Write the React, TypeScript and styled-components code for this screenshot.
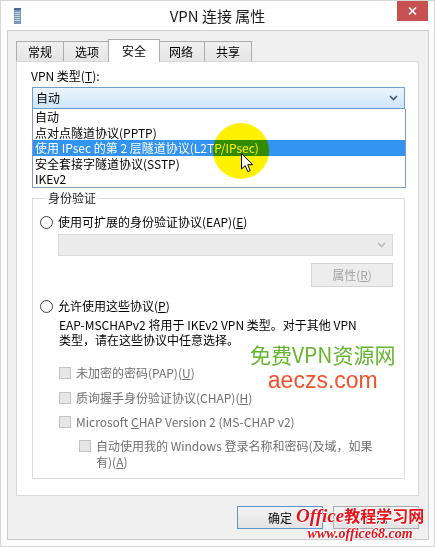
import styled, { createGlobalStyle } from "styled-components";

const GlobalStyle = createGlobalStyle`
  html, body {
    margin: 0;
    padding: 0;
    background: #fff;
  }
  body {
    font-family: "Noto Sans CJK SC", "Noto Sans", sans-serif;
    font-size: 12px;
    color: #000;
  }
  u {
    text-decoration: underline;
    text-underline-offset: 1px;
  }
`;

const Window = styled.div`
  position: relative;
  width: 435px;
  height: 547px;
  box-sizing: border-box;
  background: #fbfbfb;
  border: 1px solid #d6d6d6;
  display: flex;
  flex-direction: column;
  overflow: hidden;
`;

const TitleBar = styled.div`
  display: grid;
  grid-template-columns: 1fr auto 1fr;
  align-items: center;
  height: 29px;
  background: #fff;
`;

const TitleIcon = styled.svg`
  justify-self: start;
  margin-left: 13px;
`;

const TitleText = styled.div`
  font-size: 15px;
  line-height: 29px;
  color: #1b1b1b;
`;

const CloseButton = styled.div`
  justify-self: end;
  align-self: start;
  width: 31px;
  height: 20px;
  margin-right: 6px;
  background: #c75050;
  display: flex;
  align-items: center;
  justify-content: center;
`;

const Client = styled.div`
  flex: 1;
  margin: 0 5px 6px 6px;
  background: #f0f0f0;
  border: 1px solid #cdcdcd;
  padding: 8px 9px 10px 8px;
  display: flex;
  flex-direction: column;
`;

const TabStrip = styled.div`
  display: flex;
  align-items: flex-end;
  height: 23px;
`;

const Tab = styled.div<{ $active?: boolean }>`
  box-sizing: border-box;
  height: ${(p) => (p.$active ? "23px" : "20px")};
  margin: ${(p) => (p.$active ? "0 -2px 0 -3px" : "0 0 1px -1px")};
  padding: ${(p) => (p.$active ? "2px 13px 0" : "1px 11px 0")};
  border: 1px solid #acacac;
  border-bottom: none;
  background: ${(p) =>
    p.$active ? "#fff" : "linear-gradient(#f0f0f0, #e5e5e5)"};
  line-height: 17px;
  position: ${(p) => (p.$active ? "relative" : "static")};
  z-index: ${(p) => (p.$active ? 1 : "auto")};

  &:first-child {
    margin-left: 0;
  }
`;

const Panel = styled.div`
  flex: 1;
  margin-top: -1px;
  background: #fff;
  border: 1px solid #d9d9d9;
  padding: 6px 13px 0 14px;
  display: flex;
  flex-direction: column;
`;

const FieldLabel = styled.div`
  line-height: 16px;
`;

const SelectField = styled.div`
  position: relative;
  margin-top: 3px;
  margin-left: 1px;
`;

const ComboBox = styled.div<{ $disabled?: boolean }>`
  box-sizing: border-box;
  height: 22px;
  display: flex;
  align-items: center;
  justify-content: space-between;
  padding: 0 6px 0 3px;
  border: 1px solid ${(p) => (p.$disabled ? "#d9d9d9" : "#6f9dc9")};
  background: ${(p) =>
    p.$disabled ? "#ececec" : "linear-gradient(#ecf5fc, #cfe5f7)"};
  line-height: 16px;
`;

const DropList = styled.ul`
  position: absolute;
  left: 0;
  right: -1px;
  top: 100%;
  z-index: 2;
  margin: 0;
  padding: 0;
  list-style: none;
  background: #fff;
  border: 1px solid #7f9dbc;
  border-top: none;
`;

const DropItem = styled.li<{ $active?: boolean }>`
  height: 15.6px;
  line-height: 15.6px;
  padding-left: 2px;
  white-space: nowrap;
  background: ${(p) => (p.$active ? "#3393f0" : "transparent")};
  color: ${(p) => (p.$active ? "#fff" : "#000")};
`;

const GroupBox = styled.fieldset`
  margin: 81px 0 0 1px;
  padding: 8px 11px 8px 7px;
  border: 1px solid #dcdcdc;
  display: flex;
  flex-direction: column;
  min-width: 0;
`;

const Legend = styled.legend`
  margin-left: 6px;
  padding: 0 2px;
  line-height: 16px;
  color: #1a1a1a;
`;

const OptionRow = styled.label<{ $gap?: number; $indent?: number; $disabled?: boolean }>`
  display: flex;
  align-items: flex-start;
  gap: 5px;
  margin-top: ${(p) => p.$gap ?? 0}px;
  margin-left: ${(p) => p.$indent ?? 0}px;
  line-height: 16px;
  color: ${(p) => (p.$disabled ? "#6f6f6f" : "#000")};
`;

const Radio = styled.span`
  flex: none;
  box-sizing: border-box;
  width: 13px;
  height: 13px;
  margin-top: 1.5px;
  border: 1px solid #444;
  border-radius: 50%;
  background: #fff;
`;

const CheckBox = styled.span`
  flex: none;
  box-sizing: border-box;
  width: 12px;
  height: 12px;
  margin-top: 2px;
  border: 1px solid #c2c2c2;
  background: #e6e6e6;
`;

const SubSelect = styled.div`
  margin: 4px 0 0 18px;
`;

const SideButton = styled.div`
  align-self: flex-end;
  box-sizing: border-box;
  width: 82px;
  height: 24px;
  margin-top: 7px;
  border: 1px solid #d5d5d5;
  background: #ededed;
  color: #a3a3a3;
  line-height: 22px;
  text-align: center;
`;

const Description = styled.div`
  margin: 3px 0 0 19px;
  line-height: 15px;
`;

const ButtonRow = styled.div`
  display: flex;
  justify-content: flex-end;
  gap: 10px;
  margin-top: 10px;
`;

const DialogButton = styled.div<{ $default?: boolean }>`
  box-sizing: border-box;
  width: 86px;
  height: 23px;
  border: 1px solid ${(p) => (p.$default ? "#5d94cc" : "#acacac")};
  background: linear-gradient(#f4f4f4, #e3e3e3);
  line-height: 21px;
  text-align: center;
`;

const Spotlight = styled.div`
  position: absolute;
  left: 212px;
  top: 122px;
  width: 56px;
  height: 56px;
  border-radius: 50%;
  background: #fff100;
  mix-blend-mode: multiply;
  z-index: 5;
`;

const Pointer = styled.svg`
  position: absolute;
  left: 240px;
  top: 152px;
  z-index: 6;
`;

const SiteMark = styled.div`
  position: absolute;
  left: 249px;
  top: 343px;
  z-index: 4;
  display: flex;
  flex-direction: column;
  align-items: center;
  gap: 4px;
  line-height: 1;
`;

const SiteName = styled.span`
  font-size: 21px;
  color: #66b52f;
`;

const SiteUrl = styled.span`
  font-family: "Liberation Sans", Arial, sans-serif;
  font-size: 23px;
  color: #f2512c;
`;

const OfficeMark = styled.div`
  position: absolute;
  left: 295px;
  top: 505px;
  z-index: 4;
  display: flex;
  flex-direction: column;
  align-items: center;
  color: #e5141b;
  line-height: 1;
  text-shadow: 1px 0 #fff, -1px 0 #fff, 0 1px #fff, 0 -1px #fff;
`;

const OfficeTitle = styled.span`
  font-size: 16px;
  font-weight: bold;
  white-space: nowrap;

  em {
    font-family: "Liberation Serif", serif;
    font-style: italic;
    font-size: 19px;
  }
`;

const OfficeUrl = styled.span`
  font-family: "Liberation Serif", serif;
  font-style: italic;
  font-weight: bold;
  font-size: 14px;
  margin-top: 2px;
`;

const Chevron = ({ color }: { color: string }) => (
  <svg width="9" height="6" viewBox="0 0 9 6">
    <polyline
      points="1,1 4.5,4.5 8,1"
      fill="none"
      stroke={color}
      strokeWidth="1.6"
    />
  </svg>
);

const vpnTypes = [
  "自动",
  "点对点隧道协议(PPTP)",
  "使用 IPsec 的第 2 层隧道协议(L2TP/IPsec)",
  "安全套接字隧道协议(SSTP)",
  "IKEv2",
];

const tabs = ["常规", "选项", "安全", "网络", "共享"];

export default function App() {
  return (
    <>
      <GlobalStyle />
      <Window>
        <TitleBar>
          <TitleIcon width="7" height="16" viewBox="0 0 7 16">
            <rect x="0" y="0" width="7" height="16" fill="#7b98bb" />
            <rect x="0" y="0" width="7" height="2" fill="#4d6c92" />
            {[4, 6, 8, 10, 12].map((y) => (
              <rect key={y} x="1" y={y} width="5" height="1" fill="#c7d6e8" />
            ))}
          </TitleIcon>
          <TitleText>VPN 连接 属性</TitleText>
          <CloseButton>
            <svg width="9" height="8" viewBox="0 0 9 8">
              <path d="M1 0.5 L8 7.5 M8 0.5 L1 7.5" stroke="#fff" strokeWidth="1.6" />
            </svg>
          </CloseButton>
        </TitleBar>

        <Client>
          <TabStrip>
            {tabs.map((t) => (
              <Tab key={t} $active={t === "安全"}>
                {t}
              </Tab>
            ))}
          </TabStrip>

          <Panel>
            <FieldLabel>
              VPN 类型(<u>T</u>):
            </FieldLabel>
            <SelectField>
              <ComboBox>
                <span>自动</span>
                <Chevron color="#3f5a78" />
              </ComboBox>
              <DropList>
                {vpnTypes.map((v, i) => (
                  <DropItem key={v} $active={i === 2}>
                    {v}
                  </DropItem>
                ))}
              </DropList>
            </SelectField>

            <GroupBox>
              <Legend>身份验证</Legend>
              <OptionRow>
                <Radio />
                <span>
                  使用可扩展的身份验证协议(EAP)(<u>E</u>)
                </span>
              </OptionRow>
              <SubSelect>
                <ComboBox $disabled>
                  <span />
                  <Chevron color="#b9b9b9" />
                </ComboBox>
              </SubSelect>
              <SideButton>
                属性(<u>R</u>)
              </SideButton>

              <OptionRow $gap={11}>
                <Radio />
                <span>
                  允许使用这些协议(<u>P</u>)
                </span>
              </OptionRow>
              <Description>
                EAP-MSCHAPv2 将用于 IKEv2 VPN 类型。对于其他 VPN
                <br />
                类型，请在这些协议中任意选择。
              </Description>

              <OptionRow $gap={18} $indent={19} $disabled>
                <CheckBox />
                <span>
                  未加密的密码(PAP)(<u>U</u>)
                </span>
              </OptionRow>
              <OptionRow $gap={9} $indent={19} $disabled>
                <CheckBox />
                <span>
                  质询握手身份验证协议(CHAP)(<u>H</u>)
                </span>
              </OptionRow>
              <OptionRow $gap={8} $indent={19} $disabled>
                <CheckBox />
                <span>
                  Microsoft <u>C</u>HAP Version 2 (MS-CHAP v2)
                </span>
              </OptionRow>
              <OptionRow $gap={8} $indent={39} $disabled>
                <CheckBox />
                <span>
                  自动使用我的 Windows 登录名称和密码(及域，如果
                  <br />
                  有)(<u>A</u>)
                </span>
              </OptionRow>
            </GroupBox>
          </Panel>

          <ButtonRow>
            <DialogButton $default>确定</DialogButton>
            <DialogButton>取消</DialogButton>
          </ButtonRow>
        </Client>

        <Spotlight />
        <Pointer width="13" height="20" viewBox="0 0 13 20">
          <path
            d="M0.5 0.5 L0.5 16 L4.2 12.6 L6.8 18.6 L9.2 17.6 L6.7 11.7 L11.6 11.7 Z"
            fill="#fff"
            stroke="#000"
            strokeWidth="1"
            strokeLinejoin="round"
          />
        </Pointer>

        <SiteMark>
          <SiteName>免费VPN资源网</SiteName>
          <SiteUrl>aeczs.com</SiteUrl>
        </SiteMark>

        <OfficeMark>
          <OfficeTitle>
            <em>Office</em>教程学习网
          </OfficeTitle>
          <OfficeUrl>www.office68.com</OfficeUrl>
        </OfficeMark>
      </Window>
    </>
  );
}
